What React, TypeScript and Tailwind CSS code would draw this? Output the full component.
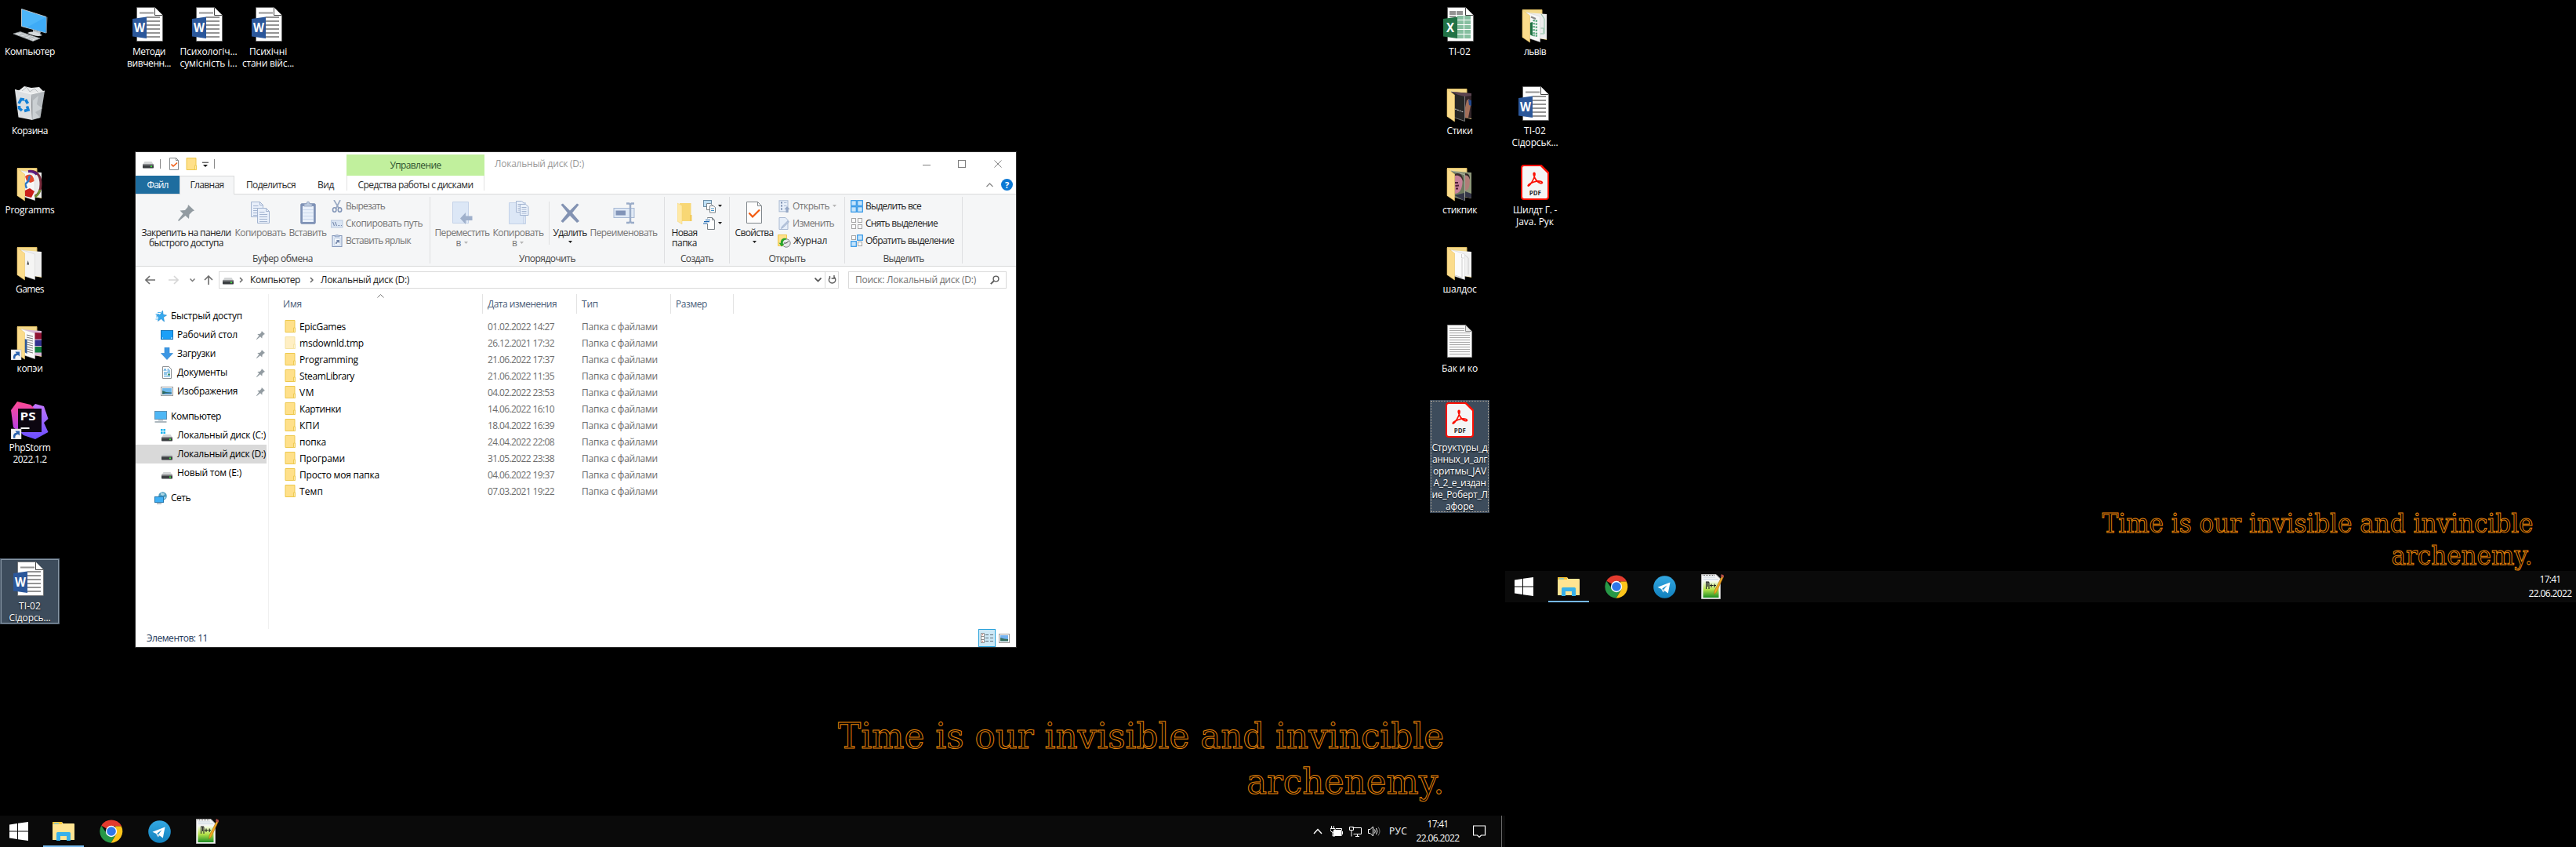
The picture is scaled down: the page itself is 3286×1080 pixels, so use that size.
import React, { useLayoutEffect, useRef } from "react";

/* Text that spreads its letters so that the label is exactly `w` pixels wide. */
function Fit({ w, children, className = "" }: { w: number; children: string; className?: string }) {
  const ref = useRef<HTMLSpanElement>(null);
  useLayoutEffect(() => {
    const el = ref.current;
    if (!el) return;
    el.style.letterSpacing = "0px";
    const natural = el.getBoundingClientRect().width;
    el.style.letterSpacing = `${(w - natural) / children.length}px`;
  }, [w, children]);
  return (
    <span className={`block ${className}`} style={{ width: w }}>
      <span ref={ref} className="inline-block whitespace-pre">
        {children}
      </span>
    </span>
  );
}

/* Outlined slogan line, condensed horizontally to `w` pixels. */
function SloganLine({ w, children }: { w: number; children: string }) {
  const ref = useRef<HTMLSpanElement>(null);
  useLayoutEffect(() => {
    const el = ref.current;
    if (!el) return;
    el.style.transform = "none";
    el.style.transform = `scaleX(${w / el.getBoundingClientRect().width})`;
  }, [w, children]);
  return (
    <span ref={ref} className="block w-max origin-right whitespace-nowrap">
      {children}
    </span>
  );
}

/* ---------- desktop icons (48 × 48) ---------- */

const Box48 = ({ children }: { children: React.ReactNode }) => (
  <svg width="48" height="48" viewBox="0 0 48 48" className="block">
    {children}
  </svg>
);

const OfficeLetter = ({ children, w }: { children: string; w: number }) => (
  <text x="12" y="33.6" textAnchor="middle" fontFamily="Open Sans, sans-serif" fontWeight="700" fontSize="15.5" textLength={w} lengthAdjust="spacingAndGlyphs" fill="#fff">
    {children}
  </text>
);

const WordIcon = () => (
  <Box48>
    <path d="M8.5 2.5H31.5L41.5 12.5V45.5H8.5Z" fill="#fff" stroke="#555" strokeWidth=".6" />
    <path d="M31.5 2.5V12.5H41.5" fill="#fff" stroke="#444" strokeWidth="1" />
    <rect x="12" y="8.5" width="18" height="2" fill="#949494" />
    {[14, 19, 24, 29, 34, 39].map((y) => (
      <rect key={y} x="21" y={y} width="17" height="2" fill="#949494" />
    ))}
    <path d="M3 17L21 14.5V42L3 39.5Z" fill="#2b579a" />
    <OfficeLetter w={14}>W</OfficeLetter>
  </Box48>
);

const ExcelIcon = () => (
  <Box48>
    <path d="M8.5 2.5H31.5L41.5 12.5V45.5H8.5Z" fill="#fff" stroke="#555" strokeWidth=".6" />
    <path d="M31.5 2.5V12.5H41.5" fill="#fff" stroke="#444" strokeWidth="1" />
    {[11, 20].map((x) => (
      <rect key={x} x={x} y="7" width="8" height="5" fill="#949494" />
    ))}
    <rect x="11" y="13" width="8" height="2" fill="#949494" />
    {[13, 19, 25, 31, 37].map((y) => (
      <g key={y} fill="#86bfa0">
        <rect x="21" y={y} width="8" height="5" />
        <rect x="30" y={y} width="8" height="5" />
      </g>
    ))}
    <path d="M3 17L21 14.5V42L3 39.5Z" fill="#217346" />
    <OfficeLetter w={10}>X</OfficeLetter>
  </Box48>
);

const PdfIcon = () => (
  <Box48>
    <path d="M10 2H32L41 11V42Q41 45 38 45H10Q7 45 7 42V5Q7 2 10 2Z" fill="#f5f5f5" stroke="#fb0f02" strokeWidth="2" />
    <path d="M32 2L41 11V13L30 2Z" fill="#fb0f02" />
    <path
      d="M16 26.5C14 28.5 16 29 18.5 25.5C21 22 23.5 17 24 13.5C24.2 10.4 21.5 10.6 22.4 14C23.4 18.5 27 23.6 31 24.6C34.6 25.3 34.2 22.4 30 22C26 21.7 19.5 23.4 16 26.5Z"
      fill="none"
      stroke="#fb0f02"
      strokeWidth="1.7"
    />
    <text x="24.3" y="40.3" textAnchor="middle" fontFamily="Open Sans, sans-serif" fontWeight="700" fontSize="9.5" textLength="15" lengthAdjust="spacingAndGlyphs" fill="#2c2c2c">
      PDF
    </text>
  </Box48>
);

const TextFileIcon = () => (
  <Box48>
    <path d="M8.5 3.5H31.5L39.5 11.5V44.5H8.5Z" fill="#fafafa" stroke="#8f8f8f" />
    {[7, 10, 13, 16, 19, 22, 25, 28, 31, 34, 37, 40].map((y) => (
      <rect key={y} x="11" y={y} width={y < 12 ? 19 : 26} height="1" fill="#a8a8a8" />
    ))}
    <path d="M31.5 3.5V11.5H39.5Z" fill="#e8e8e8" stroke="#8f8f8f" />
  </Box48>
);

const Folder48 = ({ children, shortcut }: { children: React.ReactNode; shortcut?: boolean }) => (
  <Box48>
    <path d="M8 5H33V11H39V44L30 42L18 40L8 41Z" fill="#f3d98b" />
    <path d="M8.5 5.5H33V12" fill="none" stroke="#dcbb62" />
    {children}
    <path d="M8 6L17.5 13V47L8 40.5Z" fill="#fbdc8b" stroke="#e9c468" strokeWidth=".6" />
    {shortcut && <ShortcutArrow />}
  </Box48>
);

const ShortcutArrow = () => (
  <g>
    <rect x="0" y="35" width="13" height="13" fill="#f4f4f4" stroke="#bbb" strokeWidth=".6" />
    <path d="M3 46.5C2.6 42 4 40 7 39.8L5.4 37.6H11V43.4L9 41.8C6.4 42.2 5 43.4 5.4 46.5Z" fill="#2a62ad" />
  </g>
);

const Pages = ({ front = "#f7f7f7", back = "#ececec" }: { front?: string; back?: string }) => (
  <g>
    <path d="M13 9L39 11V43L28 42Z" fill={back} />
    <path d="M13 8.5L30.5 14V46.5L17 42Z" fill={front} stroke="#d0d0d0" strokeWidth=".5" />
  </g>
);

const ProgrammsIcon = () => (
  <Folder48>
    <Pages />
    <path d="M22 9.5C35 8 38 17 38 26S35 39 30.5 41" fill="none" stroke="#7a2b3c" strokeWidth="3" />
    <path d="M22 9.5C28 9 31 11 33 13.5" fill="none" stroke="#5b1a7c" strokeWidth="3" />
    <path d="M37 33C36 37 34 40 30.5 42" fill="none" stroke="#6f8f2f" strokeWidth="3" />
    <path d="M18 16C24 11 29 14 29.5 22L25 24L20 22Z" fill="#e2492c" />
    <path d="M17.5 34L24 31L30 35L26 43L18 41Z" fill="#c9201b" />
    <path d="M24 15L22 22L18 26L20 31" fill="none" stroke="#2d79c7" strokeWidth="2.5" />
  </Folder48>
);
const GamesIcon = () => (
  <Folder48>
    <Pages front="#f5f5f4" back="#eee" />
    <path d="M20.5 27.5L21.7 22L23 27.5Z" fill="#333" />
  </Folder48>
);
const CopyFolderIcon = () => (
  <Folder48 shortcut>
    <Pages front="#fafafa" back="#d8b8d8" />
    <path d="M30.5 13L39 13.5V21.5H30.5Z" fill="#8f1232" />
    <path d="M30.5 22.5H39V30H30.5Z" fill="#32318f" />
    <path d="M30.5 31H39V38.5H30.5Z" fill="#0d7a3a" />
    <path d="M17 21L20.5 22V40L17 38Z" fill="#2b579a" />
    {[16, 19, 22, 25, 28, 31, 34, 37].map((y) => (
      <path key={y} d={`M20 ${y}L28 ${y + 2}`} stroke="#777" strokeWidth="1" />
    ))}
  </Folder48>
);
const LvivIcon = () => (
  <Folder48>
    <Pages />
    <path d="M17.5 22L21 21V39L17.5 37Z" fill="#1d7044" />
    {[19, 23, 27, 31, 35, 38].map((y) => (
      <path key={y} d={`M21.5 ${y}L27.5 ${y + 1}`} stroke="#54a57a" strokeWidth="2.2" strokeDasharray="2.4 .8" />
    ))}
    <path d="M19 14.5L25 17" stroke="#888" strokeWidth="2" />
    <path d="M32 11L36 17V36H31M31.5 29H35V35" fill="none" stroke="#8bbfa3" strokeWidth="1" />
  </Folder48>
);
const StykyIcon = () => (
  <Folder48>
    <Pages front="#262626" back="#33262a" />
    <path d="M13 9L39 11V14L30 15L22 13Z" fill="#5a4350" />
    <path d="M31 29L33 20L36 18L38 26L35 42H31Z" fill="#a3705b" />
    <path d="M35 19L39 20V27L36 26Z" fill="#24498f" />
    <path d="M18 31L29 35" stroke="#b9b9b9" strokeWidth="1.3" strokeDasharray="2 1" />
  </Folder48>
);
const StykpykIcon = () => (
  <Folder48>
    <Pages front="#6e7a60" back="#8d9678" />
    <path d="M17.5 15C23 10 28.5 16 27.5 24C27 32 24 38 17.5 38Z" fill="#c78199" />
    <path d="M18 13C24 10 29 15 28.5 23C26 15 22 14 18 15Z" fill="#3c2c2c" />
    <path d="M31 13C37 13 37 20 36.5 26C36 31 34 34 31 34Z" fill="#b07d78" />
    <path d="M31 12C36 12 37 15 37 20C35 15 34 14.5 31 14.5Z" fill="#2f2525" />
    <path d="M18 24H22M18.5 28L23 27.5M19 31.5H22" stroke="#4d1f35" strokeWidth="1.8" />
    <path d="M17.5 40L30 37V47ZM31 35L39 38V44L31 42Z" fill="#343648" />
  </Folder48>
);
const ShaldosIcon = () => (
  <Folder48>
    <Pages front="#fbfbfb" back="#f1f1f1" />
    <path d="M26.5 14V19H29M30.5 15L35 19V40M27 20V44L18 41" fill="none" stroke="#c9c9c9" strokeWidth=".9" />
  </Folder48>
);

const ComputerIcon = () => (
  <Box48>
    <path d="M13.5 4.5L45 14.5V35L13.5 26.5Z" fill="#4db6fa" stroke="#b9c4cb" />
    <path d="M45 14.5V35L20 28Z" fill="#38a7f5" opacity=".7" />
    <path d="M46 15L45 35" stroke="#6c7780" />
    <path d="M28 31L38 33.5L37 37L28 35Z" fill="#b9c0c4" />
    <path d="M21 35Q29 31 40 38Q33 41 21 35Z" fill="#d8dcde" />
    <path d="M3 36L12 33.5L37 42L28 45.5Z" fill="#e4e7e9" stroke="#8c9397" strokeWidth=".7" />
    <path d="M8 35L32 43.6M6 36.6L28 44M10 34L34 42.8M9 38.5L18 35.5M15 40.5L24 37.8M21 42.5L30 40" stroke="#9aa1a5" strokeWidth=".6" />
  </Box48>
);

const BinIcon = () => (
  <Box48>
    <path d="M8 9L17 2L26 4L36 3L41 8L28 14Z" fill="#e9ebec" />
    <path d="M14 8L20 3L24 9L30 5L35 10" fill="none" stroke="#b9bdc0" />
    <path d="M5 6.5L26 12L27 45L9.5 41.5Z" fill="#dcdfe2" />
    <path d="M43 8L26 12L27 45L37.5 42Z" fill="#b3b8bc" />
    <path d="M28 20L35 14L33 25L40 30L31 35L37 42L28 44Z" fill="#cbd0d3" />
    <path d="M5 6.5L26 12L43 8" fill="none" stroke="#f5f6f6" strokeWidth="1.2" />
    <path d="M10 24L13 18.5L17 19M18.5 19L21.5 24M20.5 27.5L22 32L17 33.5M14 33L10.5 30V27" fill="none" stroke="#1380d6" strokeWidth="3.6" />
  </Box48>
);

const PhpStormIcon = () => (
  <Box48>
    <defs>
      <linearGradient id="ps-a" x1="0" y1="0" x2="0" y2="1">
        <stop offset="0" stopColor="#ff4a93" />
        <stop offset="1" stopColor="#b43fea" />
      </linearGradient>
      <linearGradient id="ps-b" x1="0" y1="0" x2="0" y2="1">
        <stop offset="0" stopColor="#c478ff" />
        <stop offset="1" stopColor="#6a4dff" />
      </linearGradient>
    </defs>
    <path d="M26 8L31 3L42 6L47.5 22L42 27L47.5 39L31 48L16 43L9 36L24 10Z" fill="url(#ps-b)" />
    <path d="M0 11L8 0L25 4L30 9L10 38L3 33Z" fill="url(#ps-a)" />
    <rect x="9" y="9" width="30" height="30" fill="#0c0610" />
    <text x="11.5" y="23.5" fontFamily="Open Sans, sans-serif" fontWeight="700" fontSize="15" textLength="20" lengthAdjust="spacingAndGlyphs" fill="#fff">
      PS
    </text>
    <rect x="12.5" y="33" width="11" height="2" fill="#fff" />
    <ShortcutArrow />
  </Box48>
);

type DesktopItem = {
  x: number;
  y: number;
  icon: React.ReactNode;
  lines: [string, number][];
  selected?: boolean;
  dotted?: boolean;
};

const desktopItems: DesktopItem[] = [
  { x: 0, y: 5, icon: <ComputerIcon />, lines: [["Компьютер", 64]] },
  { x: 0, y: 106, icon: <BinIcon />, lines: [["Корзина", 46]] },
  { x: 0, y: 207, icon: <ProgrammsIcon />, lines: [["Programms", 63]] },
  { x: 0, y: 308, icon: <GamesIcon />, lines: [["Games", 36]] },
  { x: 0, y: 409, icon: <CopyFolderIcon />, lines: [["копэи", 33]] },
  { x: 0, y: 510, icon: <PhpStormIcon />, lines: [["PhpStorm", 53], ["2022.1.2", 43]] },
  { x: 0, y: 712, icon: <WordIcon />, lines: [["ТІ-02", 28], ["Сідорсь...", 53]], selected: true },
  { x: 152, y: 5, icon: <WordIcon />, lines: [["Методи", 42], ["вивченн...", 56]] },
  { x: 228, y: 5, icon: <WordIcon />, lines: [["Психологіч...", 73], ["сумісність і...", 73]] },
  { x: 304, y: 5, icon: <WordIcon />, lines: [["Психічні", 48], ["стани війс...", 66]] },
  { x: 1824, y: 5, icon: <ExcelIcon />, lines: [["ТІ-02", 28]] },
  { x: 1824, y: 106, icon: <StykyIcon />, lines: [["Стики", 33]] },
  { x: 1824, y: 207, icon: <StykpykIcon />, lines: [["стикпик", 44]] },
  { x: 1824, y: 308, icon: <ShaldosIcon />, lines: [["шалдос", 43]] },
  { x: 1824, y: 409, icon: <TextFileIcon />, lines: [["Бак и ко", 46]] },
  {
    x: 1824,
    y: 510,
    icon: <PdfIcon />,
    lines: [["Структуры_д", 71], ["анных_и_алг", 70], ["оритмы_JAV", 68], ["А_2_е_издан", 67], ["ие_Роберт_Л", 71], ["афоре", 36]],
    selected: true,
    dotted: true,
  },
  { x: 1920, y: 5, icon: <LvivIcon />, lines: [["львів", 28]] },
  { x: 1920, y: 106, icon: <WordIcon />, lines: [["ТІ-02", 28], ["Сідорськ...", 59]] },
  { x: 1920, y: 207, icon: <PdfIcon />, lines: [["Шилдт Г. -", 56], ["Java. Рук", 48]] },
];

function DesktopIcon({ item }: { item: DesktopItem }) {
  const frame = item.selected
    ? item.dotted
      ? "bg-[#3d4c5c] outline-1 -outline-offset-2 outline-dotted outline-[#b3aa9c]"
      : "bg-[#3d4c5c] border border-[#526171] outline-1 -outline-offset-2 outline-[#8796a5]"
    : "";
  return (
    <div className={`absolute w-[76px] ${frame}`} style={{ left: item.x, top: item.y }}>
      <div className={`flex flex-col items-center pb-px ${item.selected && !item.dotted ? "-m-px pb-0.5" : ""}`}>
        <div className="mt-0.5 h-[51px]">{item.icon}</div>
        {item.lines.map(([t, w], i) => (
          <Fit key={i} w={w} className="h-[15px] leading-[15px] text-white [text-shadow:0_1px_2px_#000]">
            {t}
          </Fit>
        ))}
      </div>
    </div>
  );
}

/* ---------- small icons ---------- */

const S = ({ w = 16, h = 16, children, className = "" }: { w?: number; h?: number; children: React.ReactNode; className?: string }) => (
  <svg width={w} height={h} viewBox={`0 0 ${w} ${h}`} className={`block shrink-0 ${className}`}>
    {children}
  </svg>
);

const DriveIcon = ({ win = false }: { win?: boolean }) => (
  <S>
    <path d="M3.5 7H12.5L15 11H1Z" fill="#d3d5d6" />
    <rect x="1" y="10.5" width="14" height="5" rx=".8" fill="#3c3f42" />
    <rect x="1" y="10.5" width="14" height="1.2" fill="#8b8e90" />
    <rect x="11" y="12.5" width="2" height="1.6" fill="#3cf03c" />
    {win && <path d="M0 0H2.6V2.6H0ZM3.4 0H6V2.6H3.4ZM0 3.4H2.6V6H0ZM3.4 3.4H6V6H3.4Z" fill="#1cb4ef" />}
  </S>
);
const FolderSmall = ({ faded = false }: { faded?: boolean }) => (
  <S className={faded ? "opacity-50" : ""}>
    <path d="M2 .5H14V15.5H2Z" fill="#ffe08a" stroke="#edc84c" />
    <path d="M12.5 15.5V10H14.5V15.5Z" fill="#ffe9a8" stroke="#edc84c" strokeWidth=".9" />
  </S>
);
const CheckDoc = ({ big = false }: { big?: boolean }) =>
  big ? (
    <S w={22} h={30}>
      <path d="M1.5 1.5H15.5L20.5 6.5V28.5H1.5Z" fill="#fdfdfd" stroke="#7f868b" />
      <path d="M15.5 1.5V6.5H20.5" fill="none" stroke="#7f868b" />
      <path d="M4.5 15.5L9 20.5L18 11.5" fill="none" stroke="#f2590d" strokeWidth="2.2" />
    </S>
  ) : (
    <S>
      <path d="M2.5 .5H10.5L13.5 3.5V15.5H2.5Z" fill="#fdfdfd" stroke="#85898c" />
      <path d="M10.5 .5V3.5H13.5" fill="none" stroke="#85898c" />
      <path d="M4.5 8.5L7 11L12 6.5" fill="none" stroke="#f2590d" strokeWidth="1.6" />
    </S>
  );
const Pin = ({ big = false }: { big?: boolean }) => (
  <svg width={big ? 21 : 11} height={big ? 21 : 11} viewBox="0 0 21 21" className="block shrink-0">
    <path d="M13 0L21 7.5L18.5 8.5L14.5 12.5L14 18L9.5 14L1 21L0 20L6.5 11.5L2.5 7.5L9 7L12.5 3Z" fill="#929ba1" />
  </svg>
);
const Down = ({ className = "text-black" }: { className?: string }) => (
  <S w={7} h={4} className={className}>
    <path d="M1 0H6L3.5 3Z" fill="currentColor" />
  </S>
);
const Chevron = () => (
  <S w={5} h={8}>
    <path d="M1 1L4 4L1 7" fill="none" stroke="#666" strokeWidth="1.5" />
  </S>
);

const CopyBig = () => (
  <S w={25} h={30}>
    {[[0.5, 1.5], [8.5, 9.5]].map(([x, y]) => (
      <g key={x} transform={`translate(${x} ${y})`}>
        <path d="M0 0H11L15 4V19H0Z" fill="#e8effa" stroke="#a3b4d0" />
        <path d="M11 0V4H15M2.5 5H9M2.5 8H12.5M2.5 11H12.5M2.5 14H12.5M2.5 17H12.5" fill="none" stroke="#a3b4d0" />
      </g>
    ))}
  </S>
);
const PasteBig = () => (
  <S w={20} h={30}>
    <rect x=".8" y="3.8" width="18.4" height="25.4" rx="1" fill="#8194b8" stroke="#7a8db1" />
    <rect x="3" y="7" width="14" height="20" fill="#eaf1fb" />
    <path d="M3.5 11.5H16.5M3.5 15.5H16.5M3.5 19.5H16.5M3.5 23.5H16.5" stroke="#c9d7ec" />
    <path d="M5 7V4H8Q8 1 10 1T12 4H15V7Z" fill="#bccbe0" stroke="#8fa0bd" strokeWidth=".8" />
  </S>
);
const MoveTo = () => (
  <S w={27} h={30}>
    <path d="M1.5 1.5H21.5V28.5H1.5Z" fill="#dce7f6" stroke="#c4d2e8" />
    <path d="M19 20H21.5V28.5H19Z" fill="#e8eff9" stroke="#c4d2e8" />
    <path d="M11 22.5L18 15V19.5H26.5V25H18V30Z" fill="#9fb0cb" />
  </S>
);
const CopyTo = () => (
  <S w={27} h={30}>
    <path d="M1.5 2.5H22.5V29.5H1.5Z" fill="#dce7f6" stroke="#c4d2e8" />
    <path d="M19.5 20H22V29H19.5Z" fill="#e8eff9" stroke="#c4d2e8" />
    {[[10.5, 0.5], [15.5, 4.5]].map(([x, y]) => (
      <g key={x} transform={`translate(${x} ${y})`}>
        <path d="M0 0H7L10.5 3V14H0Z" fill="#eaf1fb" stroke="#a3b4d0" />
        <path d="M2 4H8M2 6.5H8M2 9H8M2 11.5H8" stroke="#a3b4d0" />
      </g>
    ))}
  </S>
);
const DeleteX = () => (
  <S w={26} h={30}>
    <path d="M1.5 5L4 3.5L13 12.5L22 3.5L24.5 5L16 15.5L25 26L22 28L13 19L4 28L1.5 26L10 15.5Z" fill="#8393b3" />
  </S>
);
const RenameBig = () => (
  <S w={28} h={30}>
    <rect x="1" y="9.5" width="26" height="12" fill="#dfe9f6" stroke="#a7b8d3" />
    <rect x="3.5" y="12.5" width="12.5" height="6" fill="#8194b8" />
    <path d="M17 3.5H20.5L22 5L23.5 3.5H27M22 4.5V27M17 28H20.5L22 26.5L23.5 28H27" fill="none" stroke="#9aacc8" strokeWidth="2.4" />
  </S>
);
const NewFolderBig = () => (
  <S w={19} h={30}>
    <path d="M3 3H17.5V26H5Z" fill="#f8d775" />
    <path d="M0 3L6 6V30L0 26Z" fill="#ffe9a6" stroke="#f1d06e" strokeWidth=".5" />
    <path d="M16 18H18.5V26H16Z" fill="#f2cb5c" />
  </S>
);
const ScissorsIcon = () => (
  <S>
    <path d="M4 0L10.5 11M12 0L6.5 11" stroke="#9aaac4" strokeWidth="1.7" />
    <ellipse cx="4.7" cy="12.5" rx="2.2" ry="2.7" fill="none" stroke="#8396b8" strokeWidth="1.6" />
    <ellipse cx="11.5" cy="12.5" rx="2.2" ry="2.7" fill="none" stroke="#8396b8" strokeWidth="1.6" />
  </S>
);
const PathIcon = () => (
  <S>
    <rect x=".5" y="4" width="14.5" height="9" fill="#dbe6f4" stroke="#b9c8de" />
    <path d="M2.5 6L4.5 11M5.5 6L7.5 11" stroke="#7588ab" strokeWidth="1.1" />
    <path d="M9 10.5H10M11 10.5H12M13 10.5H14" stroke="#7588ab" />
  </S>
);
const PasteShortcut = () => (
  <S>
    <rect x="2" y="1.5" width="12" height="14" fill="#e3ecf8" stroke="#8194b8" />
    <path d="M5 3V1H6.5L8 0L9.5 1H11V3Z" fill="#b6c5dc" stroke="#8194b8" strokeWidth=".6" />
    <rect x="4.5" y="5" width="7.5" height="8.5" fill="#f3f7fc" stroke="#b7c5da" strokeWidth=".6" />
    <path d="M6 12C6 9.5 6.5 9 8 8.8L7 7H11V11L9.5 10C8 10.2 7.5 10.8 7.7 12Z" fill="#7588ab" />
  </S>
);
const NewItem = () => (
  <S w={17} h={17}>
    <rect x=".5" y=".5" width="10" height="8" fill="#bfe0f5" stroke="#6d8fa8" />
    <path d="M4.5 4.5H9.5L11.5 6.5V12.5H4.5Z" fill="#fff" stroke="#7b8287" />
    <path d="M8.5 7.5H13L15.5 9.5V16H8.5Z" fill="#fff" stroke="#7b8287" />
    <path d="M10 11H14M10 13.5H14" stroke="#3c8fc9" />
  </S>
);
const EasyAccess = () => (
  <S w={17} h={16}>
    <path d="M5.5 1.5V.5H11.5L14.5 3.5V15.5H5.5V8" fill="#fff" stroke="#7b8287" />
    <path d="M11.5 .5V3.5H14.5" fill="none" stroke="#7b8287" />
    <path d="M3 3.5H9M1 5.7H8M0 8H5" stroke="#1b66b0" strokeWidth="1.2" />
  </S>
);
const OpenIcon = () => (
  <S>
    <rect x="2" y=".8" width="11" height="14" fill="#e6eef9" stroke="#a9b9d2" />
    <path d="M4 3.5H6M4 7.5H6M4 11.5H6" stroke="#7588ab" strokeWidth="2" />
    <path d="M8 3.5H11.5M8 7.5H11.5" stroke="#a9b9d2" />
    <path d="M12 8L15.5 12H13.5V16H10.5V12H8.5Z" fill="#94a6c5" />
  </S>
);
const EditIcon = () => (
  <S>
    <path d="M2 .5H10L13 3.5V15.5H2Z" fill="#e6eef9" stroke="#a9b9d2" />
    <path d="M14.5 6L7 13L4.5 14.5L5.5 12L13 4.5Z" fill="#b9c8de" stroke="#94a6c5" strokeWidth=".7" />
  </S>
);
const HistoryIcon = () => (
  <S w={17} h={17}>
    <path d="M.5 .5H11.5V14.5H.5Z" fill="#ffe08a" stroke="#edc84c" />
    <circle cx="11" cy="11" r="5.2" fill="#e6e7e8" stroke="#808488" />
    <path d="M11 11L14 8.5M11 11H8" stroke="#444" />
    <path d="M11 5C6 4 3.5 7 3.8 11L1.5 10.5L5 15.5L8.5 12L6.5 11.5C6.5 8.5 8 6.5 11 6.5Z" fill="#28a52c" />
  </S>
);
const SelectIcon = ({ on }: { on: boolean[] }) => (
  <S>
    {[0, 1, 2, 3].map((i) => {
      const x = i % 2 ? 9 : 1;
      const y = i > 1 ? 9 : 1;
      return on[i] ? (
        <rect key={i} x={x - 0.3} y={y - 0.3} width="6.6" height="6.6" fill="#c5e4fb" stroke="#2f95e6" strokeWidth="1.2" />
      ) : (
        <rect key={i} x={x + 0.5} y={y + 0.5} width="5" height="5" fill="#fafafa" stroke="#a5a5a5" />
      );
    })}
  </S>
);

/* ---------- ribbon pieces ---------- */

const dim = "text-[#757575]";

function BigButton({ icon, lines, arrow, width, disabled, className = "" }: { icon: React.ReactNode; lines: [string, number][]; arrow?: boolean; width: string; disabled?: boolean; className?: string }) {
  return (
    <div className={`flex shrink-0 flex-col items-center pt-[7px] ${width} ${disabled ? dim : "text-[#1f1f1f]"} ${className}`}>
      <div className="flex h-8 items-center">{icon}</div>
      <div className="mt-[3px] flex flex-col items-center leading-[13px]">
        {lines.map(([t, w], i) => (
          <div key={i} className="flex h-[13px] items-center gap-0.5">
            <Fit w={w}>{t}</Fit>
            {t === "в" && <Down className="mt-px text-[#b5b5b5]" />}
          </div>
        ))}
        {arrow && <Down className="mt-1" />}
      </div>
    </div>
  );
}

function SmallButton({ icon, text, w, disabled, arrow }: { icon: React.ReactNode; text?: string; w?: number; disabled?: boolean; arrow?: boolean }) {
  return (
    <div className={`flex h-[22px] items-center gap-[3px] ${disabled ? dim : "text-[#1f1f1f]"}`}>
      {icon}
      {text && w && <Fit w={w} className="leading-[22px]">{text}</Fit>}
      {arrow && <Down className={disabled ? "text-[#b5b5b5]" : "-ml-0.5"} />}
    </div>
  );
}

function Group({ width, label, lw, children }: { width: string; label: string; lw: number; children: React.ReactNode }) {
  return (
    <div className={`flex shrink-0 ${width}`}>
      <div className="flex flex-1 flex-col">
        <div className="flex h-[74px] items-start">{children}</div>
        <div className="flex h-4 items-center justify-center text-[#444]">
          <Fit w={lw}>{label}</Fit>
        </div>
      </div>
      <div className="my-[3px] w-px bg-[#dedfe1]" />
    </div>
  );
}

/* ---------- explorer data ---------- */

const rows: [string, number, string][] = [
  ["EpicGames", 59, "01.02.2022 14:27"],
  ["msdownld.tmp", 82, "26.12.2021 17:32"],
  ["Programming", 75, "21.06.2022 17:37"],
  ["SteamLibrary", 70, "21.06.2022 11:35"],
  ["VM", 19, "04.02.2022 23:53"],
  ["Картинки", 53, "14.06.2022 16:10"],
  ["КПИ", 26, "18.04.2022 16:39"],
  ["попка", 34, "24.04.2022 22:08"],
  ["Програми", 58, "31.05.2022 23:38"],
  ["Просто моя папка", 102, "04.06.2022 19:37"],
  ["Темп", 30, "07.03.2021 19:22"],
];

const NavRow = ({ icon, text, w, root, pinned, active }: { icon: React.ReactNode; text: string; w: number; root?: boolean; pinned?: boolean; active?: boolean }) => (
  <div className={`flex h-6 w-[167px] items-center ${root ? "pl-6" : "pl-8"} ${active ? "bg-[#d9d9d9]" : ""}`}>
    {icon}
    <Fit w={w} className="ml-[5px] leading-6">{text}</Fit>
    {pinned && (
      <div className="mr-[2px] ml-auto">
        <Pin />
      </div>
    )}
  </div>
);

const StarIcon = () => (
  <S>
    <path d="M10.5 1L11 6L15.5 7L11.5 9.5L12.5 15L8.5 11.5L4.5 14.5L5.5 9.5L2.5 7L7.5 6Z" fill="#36a9ee" stroke="#1b84cc" strokeWidth=".6" />
    <path d="M4 3.5H8M1.5 5.5H6M2 9H5M1.5 12H5" stroke="#4fb4f0" />
  </S>
);
const DeskIcon = () => (
  <S>
    <rect x=".5" y="2.5" width="15" height="11" fill="#1ba0f8" stroke="#1273b8" />
    <path d="M2 12H3M13 12H15" stroke="#fff" />
  </S>
);
const DownloadIcon = () => (
  <S>
    <path d="M5 0H11V7.5H15.5L8 15.5L.5 7.5H5Z" fill="#3c97e4" stroke="#2a7fc9" strokeWidth=".6" />
  </S>
);
const DocIcon = () => (
  <S>
    <path d="M2.5 .5H10.5L13.5 3.5V15.5H2.5Z" fill="#fdfdfd" stroke="#8a8e91" />
    <path d="M4 6L5.5 3L7 6M8.5 4H11M8.5 6H12M4 8H12M4 10H8" fill="none" stroke="#2d93d6" />
    <rect x="9" y="9.5" width="3" height="2" fill="#3f8f6a" />
    <path d="M4 12.5H12" stroke="#2d93d6" />
  </S>
);
const PictureIcon = () => (
  <S>
    <rect x=".5" y="2.5" width="15" height="11" fill="#fff" stroke="#94989b" />
    <rect x="2" y="4" width="12" height="8" fill="#6bb6ea" />
    <path d="M2 7L7 9L14 9.5V12H2Z" fill="#2d6a62" />
    <path d="M6 10H14V12H2Z" fill="#4586b5" />
  </S>
);
const PcIcon = () => (
  <S>
    <rect x=".5" y="1.5" width="15" height="10" fill="#4fb7f5" stroke="#5d91b5" />
    <path d="M5 13H11" stroke="#97a7b1" />
    <path d="M.5 15H15.5" stroke="#8c9aa4" strokeWidth="1.4" />
  </S>
);
const NetIcon = () => (
  <S>
    <circle cx="10.5" cy="5.5" r="5.3" fill="#4c9cc0" />
    <path d="M8 1.5Q12 1 13.5 3L11 5L8 4ZM11 7L15 6.5L13 9.5Z" fill="#a9d4e4" />
    <rect x=".5" y="6.5" width="11" height="7" fill="#3fb0f5" stroke="#2376ad" />
    <path d="M3 15.3H9" stroke="#8c9aa4" strokeWidth="1.2" />
  </S>
);

function Explorer() {
  return (
    <div className="absolute top-[193px] left-[172px] flex h-[633px] w-[1125px] flex-col border border-[#2d2d2d] bg-white">
      {/* title bar */}
      <div className="flex h-[30px] shrink-0 items-start">
        <div className="flex w-[269px] items-center pt-[7px] pl-2">
          <div className="-mt-1"><DriveIcon /></div>
          <div className="mr-[9px] ml-[7px] h-3 w-px bg-[#8a8a8a]" />
          <CheckDoc />
          <div className="ml-[6px]"><FolderSmall /></div>
          <S w={8} h={8} className="mt-0.5 ml-[6px]">
            <path d="M0 1.2H8" stroke="#222" />
            <path d="M1 4H7L4 7Z" fill="#111" />
          </S>
          <div className="ml-[7px] h-3 w-px bg-[#8a8a8a]" />
        </div>
        <div className="mt-[3px] flex h-[27px] w-44 items-center justify-center bg-[#c1f09d] text-[#2f5230]">
          <Fit w={65}>Управление</Fit>
        </div>
        <Fit w={114} className="ml-[13px] leading-[30px] text-[#999]">Локальный диск (D:)</Fit>
        <div className="ml-auto flex h-[30px] items-center pr-[17px] text-[#808080]">
          <S w={11} h={11}><path d="M0 6.5H10" stroke="currentColor" /></S>
          <S w={11} h={11} className="ml-[34px]"><rect x=".5" y=".5" width="9" height="9" fill="none" stroke="currentColor" /></S>
          <S w={11} h={11} className="ml-[35px]"><path d="M.5 .5L9.5 9.5M9.5 .5L.5 9.5" stroke="currentColor" /></S>
        </div>
      </div>

      {/* tabs */}
      <div className="flex h-6 shrink-0 leading-[23px] text-[#2b2b2b]">
        <div className="flex w-14 justify-center border-b border-[#dadbdc] bg-[#1e6d9f] text-white"><Fit w={27}>Файл</Fit></div>
        <div className="flex w-[70px] justify-center border-x border-t border-[#dadbdc] bg-[#f5f6f7] leading-[22px]"><Fit w={43}>Главная</Fit></div>
        <div className="flex w-[143px] border-b border-[#dadbdc] pl-[15px]">
          <Fit w={63}>Поделиться</Fit>
          <Fit w={21} className="ml-[28px]">Вид</Fit>
        </div>
        <div className="flex w-44 justify-center border-b border-[#dadbdc]">
          <div className="mb-1 w-px bg-[#e2e2e2]" />
          <div className="flex flex-1 justify-center"><Fit w={147}>Средства работы с дисками</Fit></div>
          <div className="mb-1 w-px bg-[#e2e2e2]" />
        </div>
        <div className="flex flex-1 items-center justify-end border-b border-[#dadbdc] pr-1">
          <S w={9} h={6}><path d="M.5 5L4.5 1L8.5 5" fill="none" stroke="#8b8b8b" strokeWidth="1.3" /></S>
          <div className="ml-[10px] flex size-[15px] items-center justify-center rounded-full bg-[#0a78d4] text-[11px] leading-none font-bold text-white">?</div>
        </div>
      </div>

      {/* ribbon */}
      <div className="flex h-[92px] shrink-0 border-b border-[#dadbdc] bg-[#f5f6f7]">
        <Group width="w-[376px]" label="Буфер обмена" lw={77}>
          <BigButton className="ml-[7px]" width="w-[115px]" icon={<Pin big />} lines={[["Закрепить на панели", 114], ["быстрого доступа", 95]]} />
          <BigButton className="ml-1" width="w-[66px]" disabled icon={<CopyBig />} lines={[["Копировать", 65]]} />
          <BigButton className="ml-[3px]" width="w-[49px]" disabled icon={<PasteBig />} lines={[["Вставить", 48]]} />
          <div className="mt-1 ml-[5px]">
            <SmallButton disabled icon={<ScissorsIcon />} text="Вырезать" w={50} />
            <SmallButton disabled icon={<PathIcon />} text="Скопировать путь" w={98} />
            <SmallButton disabled icon={<PasteShortcut />} text="Вставить ярлык" w={83} />
          </div>
        </Group>
        <Group width="w-[299px]" label="Упорядочить" lw={72}>
          <BigButton className="ml-[5px]" width="w-[71px]" disabled icon={<MoveTo />} lines={[["Переместить", 70], ["в", 7]]} />
          <BigButton className="ml-[3px]" width="w-[66px]" disabled icon={<CopyTo />} lines={[["Копировать", 65], ["в", 7]]} />
          <div className="mt-[9px] ml-[6px] h-[55px] w-px bg-[#dedfe1]" />
          <BigButton className="ml-1" width="w-11" arrow icon={<DeleteX />} lines={[["Удалить", 43]]} />
          <BigButton className="ml-[3px]" width="w-[87px]" disabled icon={<RenameBig />} lines={[["Переименовать", 86]]} />
        </Group>
        <Group width="w-[83px]" label="Создать" lw={42}>
          <BigButton className="ml-2" width="w-[34px]" icon={<NewFolderBig />} lines={[["Новая", 33], ["папка", 32]]} />
          <div className="mt-1 ml-[7px]">
            <SmallButton icon={<NewItem />} arrow />
            <SmallButton icon={<EasyAccess />} arrow />
          </div>
        </Group>
        <Group width="w-[147px]" label="Открыть" lw={47}>
          <BigButton className="ml-[6px]" width="w-[50px]" arrow icon={<CheckDoc big />} lines={[["Свойства", 49]]} />
          <div className="mt-1 ml-[5px]">
            <SmallButton disabled icon={<OpenIcon />} text="Открыть" w={47} arrow />
            <SmallButton disabled icon={<EditIcon />} text="Изменить" w={53} />
            <SmallButton icon={<HistoryIcon />} text="Журнал" w={43} />
          </div>
        </Group>
        <Group width="w-[150px]" label="Выделить" lw={52}>
          <div className="mt-1 ml-[7px]">
            <SmallButton icon={<SelectIcon on={[true, true, true, true]} />} text="Выделить все" w={71} />
            <SmallButton icon={<SelectIcon on={[false, false, false, false]} />} text="Снять выделение" w={92} />
            <SmallButton icon={<SelectIcon on={[false, true, true, false]} />} text="Обратить выделение" w={113} />
          </div>
        </Group>
      </div>

      {/* address row */}
      <div className="flex h-[34px] shrink-0 items-center pr-3 pl-[12px] text-[#1a1a1a]">
        <S w={13} h={12}><path d="M6 1L1 6L6 11M1 6H13" fill="none" stroke="#6d6d6d" strokeWidth="1.6" /></S>
        <S w={13} h={12} className="ml-[17px]"><path d="M7 1L12 6L7 11M12 6H0" fill="none" stroke="#d6d6d6" strokeWidth="1.6" /></S>
        <S w={7} h={5} className="ml-[14px]"><path d="M.5 .5L3.5 3.5L6.5 .5" fill="none" stroke="#7a7a7a" strokeWidth="1.5" /></S>
        <S w={12} h={12} className="ml-[11px]"><path d="M1 6L6 1L11 6M6 1V12" fill="none" stroke="#6d6d6d" strokeWidth="1.6" /></S>
        <div className="ml-[7px] flex h-[22px] w-[791px] items-center border border-[#d9d9d9]">
          <div className="-mt-1 ml-[3px]"><DriveIcon /></div>
          <div className="ml-[6px]"><Chevron /></div>
          <Fit w={64} className="ml-[9px] leading-5">Компьютер</Fit>
          <div className="ml-[12px]"><Chevron /></div>
          <Fit w={113} className="ml-[9px] leading-5">Локальный диск (D:)</Fit>
          <S w={9} h={6} className="mr-1 ml-auto"><path d="M.5 .5L4.5 4.5L8.5 .5" fill="none" stroke="#555" strokeWidth="1.7" /></S>
          <div className="flex h-full w-[17px] items-center justify-center border-l border-[#d9d9d9]">
            <S w={11} h={12}><path d="M3 2.5A4.2 4.2 0 1 0 8.3 2.6M2.5 1V4.5M8 0V4H4.6" fill="none" stroke="#5c5c5c" strokeWidth="1.4" /></S>
          </div>
        </div>
        <div className="ml-3 flex h-[22px] flex-1 items-center border border-[#d9d9d9] pr-2 pl-2 text-[#727272]">
          <Fit w={154} className="leading-5">Поиск: Локальный диск (D:)</Fit>
          <S w={12} h={12} className="ml-auto"><circle cx="7.5" cy="4.5" r="3.4" fill="none" stroke="#5c5c5c" strokeWidth="1.4" /><path d="M5 7L.8 11.2" stroke="#5c5c5c" strokeWidth="1.9" /></S>
        </div>
      </div>

      {/* body */}
      <div className="mt-px flex h-[427px] shrink-0 text-black">
        <div className="w-[170px] shrink-0 border-r border-[#f0f0f0] pt-4">
          <NavRow root icon={<StarIcon />} text="Быстрый доступ" w={91} />
          <NavRow icon={<DeskIcon />} text="Рабочий стол" w={77} pinned />
          <NavRow icon={<DownloadIcon />} text="Загрузки" w={49} pinned />
          <NavRow icon={<DocIcon />} text="Документы" w={64} pinned />
          <NavRow icon={<PictureIcon />} text="Изображения" w={77} pinned />
          <div className="h-2" />
          <NavRow root icon={<PcIcon />} text="Компьютер" w={64} />
          <NavRow icon={<DriveIcon win />} text="Локальный диск (C:)" w={113} />
          <NavRow icon={<DriveIcon />} text="Локальный диск (D:)" w={113} active />
          <NavRow icon={<DriveIcon />} text="Новый том (E:)" w={82} />
          <div className="h-2" />
          <NavRow root icon={<NetIcon />} text="Сеть" w={25} />
        </div>
        <div className="flex-1">
          <div className="flex h-[25px] leading-[26px] text-[#4c607a]">
            <div className="relative w-[273px] border-r border-[#e3e3e3] pl-[18px]">
              <Fit w={24}>Имя</Fit>
              <S w={9} h={5} className="absolute top-0 left-[138px]"><path d="M.5 4.5L4.5 .5L8.5 4.5" fill="none" stroke="#777" /></S>
            </div>
            <div className="w-[120px] border-r border-[#e3e3e3] pl-[6px]"><Fit w={88}>Дата изменения</Fit></div>
            <div className="w-[120px] border-r border-[#e3e3e3] pl-[6px]"><Fit w={21}>Тип</Fit></div>
            <div className="w-20 border-r border-[#e3e3e3] pl-[6px]"><Fit w={40}>Размер</Fit></div>
          </div>
          <div className="pt-[6px]">
            {rows.map(([name, w, date], i) => (
              <div key={name} className="flex h-[21px] items-center leading-[21px]">
                <div className="-mt-px ml-[19px]"><FolderSmall faded={i === 1} /></div>
                <div className="ml-1 w-[240px]"><Fit w={w}>{name}</Fit></div>
                <div className="w-[120px] text-[#6d6d6d]"><Fit w={85}>{date}</Fit></div>
                <div className="text-[#6d6d6d]"><Fit w={97}>Папка с файлами</Fit></div>
              </div>
            ))}
          </div>
        </div>
      </div>

      {/* status bar */}
      <div className="flex flex-1 items-center pr-2 pl-[14px] text-[#1e395b]">
        <Fit w={78} className="leading-[22px]">Элементов: 11</Fit>
        <div className="ml-auto flex h-[23px] w-[22px] items-center justify-center border border-[#26a0da] bg-[#cce8f6]">
          <S w={16} h={13}>
            <path d="M.5 .5H4.5V12.5H.5ZM.5 4.5H4.5M.5 8.5H4.5" fill="#fff" stroke="#8c8c8c" />
            <path d="M2 2.5H3M2 10.5H3" stroke="#c0392b" />
            <path d="M6 2.5H10M12 2.5H16M6 6.5H10M12 6.5H16M6 10.5H10M12 10.5H16" stroke="#5d6b75" />
          </S>
        </div>
        <S w={14} h={12} className="ml-1">
          <rect x=".5" y=".5" width="13" height="11" fill="#fff" stroke="#9a9a9a" />
          <rect x="2" y="2" width="10" height="7.5" fill="#74b2f0" />
          <path d="M2 5L7 6.5L12 7V9.5H2Z" fill="#38705f" />
        </S>
      </div>
    </div>
  );
}

/* ---------- taskbar ---------- */

const WindowsLogo = () => (
  <S w={24} h={24}>
    <path d="M0 3.4L10 2V11.5H0ZM11 1.8L24 0V11.5H11ZM0 12.5H10V22L0 20.6ZM11 12.5H24V24L11 22.2Z" fill="#fff" />
  </S>
);
const ExplorerLogo = () => (
  <S w={28} h={24}>
    <path d="M0 1Q0 0 1 0H12L13.5 2H27Q28 2 28 3V23H0Z" fill="#ffe492" />
    <path d="M0 3V1Q0 0 1 0H12V3Z" fill="#fcc635" />
    <rect x="2" y="1.2" width="6" height="1.5" fill="#7bc8d8" />
    <path d="M5 24V14.5Q5 13 6.5 13H21.5Q23 13 23 14.5V24H18V18H10V24Z" fill="#38b1ea" />
  </S>
);
const ChromeLogo = () => (
  <S w={30} h={30}>
    <path d="M15 15L2.3 7.7A14.7 14.7 0 0 1 27.7 7.7L28.3 8.5H15Z" fill="#e33b2e" />
    <path d="M2.2 7.8A14.7 14.7 0 0 0 14.6 29.7L21 18.5L9.4 18.3Z" fill="#279847" />
    <path d="M27.8 8.5A14.7 14.7 0 0 1 14.6 29.7L21.3 18.5L20 8.5Z" fill="#fcc41b" />
    <circle cx="15" cy="15" r="7.2" fill="#fff" />
    <circle cx="15" cy="15" r="5.8" fill="#2f77ea" />
  </S>
);
const TelegramLogo = () => (
  <S w={29} h={29}>
    <defs>
      <linearGradient id="tg" x1="0" y1="0" x2="0" y2="1">
        <stop offset="0" stopColor="#33a8e2" />
        <stop offset="1" stopColor="#1180bd" />
      </linearGradient>
    </defs>
    <circle cx="14.5" cy="14.5" r="14.3" fill="url(#tg)" />
    <path d="M5.5 14.8L21.5 8.6L18.8 22.6L13 18.2L17.5 12.2L11.4 16.6L12.4 21.5L10.2 17Z" fill="#fff" />
    <path d="M11.4 16.6L12.4 21.5L14.8 19.5Z" fill="#c5dbe8" />
  </S>
);
const NotepadLogo = () => (
  <S w={29} h={32}>
    <defs>
      <linearGradient id="npp" x1="0" y1="0" x2="0" y2="1">
        <stop offset="0" stopColor="#f7fbf0" />
        <stop offset=".5" stopColor="#b7e34b" />
        <stop offset="1" stopColor="#1b8c22" />
      </linearGradient>
    </defs>
    <path d="M.5 .5H19L24.5 6V31.5H.5Z" fill="#f4f4f4" stroke="#b5b5b5" />
    <rect x="2.5" y="9" width="20" height="21" fill="url(#npp)" />
    <path d="M3 4H18M3 6.5H22" stroke="#c9d7e2" />
    <path d="M2 1.5H18" stroke="#555" strokeDasharray="1 1" />
    <path d="M6.5 19V10H8.5V16M8.5 10.5Q10 9 10 12V19M11 14.5H15M13 12.5V17M15.5 14.5H19M17.2 12.5V17" fill="none" stroke="#222" strokeWidth="1.1" />
    <path d="M27 1.5L28.8 3L19.5 23L16.5 26L17 21.5Z" fill="#f2a922" stroke="#9b5f10" strokeWidth=".5" />
    <path d="M26 0L29 1.8L28 5L25 3Z" fill="#b9504a" />
  </S>
);

const Clock = () => (
  <div className="flex w-[60px] flex-col items-center leading-[18px]">
    <Fit w={27}>17:41</Fit>
    <Fit w={55}>22.06.2022</Fit>
  </div>
);

function TaskbarApps() {
  return (
    <>
      <div className="flex w-12 items-center justify-center"><WindowsLogo /></div>
      <div className="ml-[7px] flex w-[52px] items-center justify-center border-b-2 border-[#76b9ed] pt-0.5"><ExplorerLogo /></div>
      <div className="ml-[9px] flex w-[52px] items-center justify-center"><ChromeLogo /></div>
      <div className="ml-[9px] flex w-[52px] items-center justify-center"><TelegramLogo /></div>
      <div className="ml-[9px] flex w-[52px] items-center justify-center"><NotepadLogo /></div>
    </>
  );
}

function Tray() {
  return (
    <div className="ml-auto flex items-center">
      <S w={12} h={8}><path d="M1 7L6 1.5L11 7" fill="none" stroke="#fff" strokeWidth="1.4" /></S>
      <S w={16} h={14} className="ml-[10px]">
        <rect x="4.5" y="5.5" width="9.5" height="7" fill="#fff" stroke="#fff" />
        <path d="M7 3.5H14.5V5.5M15.5 7V11" stroke="#fff" fill="none" />
        <path d="M1.5 0V3M4.5 0V3M0 3.5H6V6L4 8H2L0 6ZM3 8V13H6" fill="none" stroke="#fff" />
      </S>
      <S w={17} h={14} className="ml-2">
        <path d="M4.5 2.5H15.5V10.5H5.5M8 13.5H13M10.5 10.5V13.5" fill="none" stroke="#fff" />
        <path d="M.5 1.5H5.5V5.5H.5ZM3 5.5V13.5" fill="none" stroke="#fff" />
      </S>
      <S w={17} h={14} className="ml-[7px]">
        <path d="M.5 4.5H3L6.5 1V13L3 9.5H.5Z" fill="none" stroke="#fff" />
        <path d="M8.5 4.5Q10 7 8.5 9.5M10.5 3Q13.3 7 10.5 11" fill="none" stroke="#fff" />
        <path d="M13 1.5Q17 7 13 12.5" fill="none" stroke="#777" />
      </S>
      <Fit w={23} className="ml-[10px]">РУС</Fit>
      <div className="ml-[9px]"><Clock /></div>
      <S w={17} h={17} className="ml-[15px]">
        <path d="M.5 1H15.5V13H10.5L8 15.5L5.5 13H.5Z" fill="none" stroke="#fff" strokeWidth="1.2" />
      </S>
      <div className="mr-1 ml-[19px] h-10 w-px bg-[#6a6a6a]" />
    </div>
  );
}

const sloganClass =
  "flex flex-col items-end font-['DejaVu_Serif',serif] text-transparent [-webkit-text-stroke-color:#e8850a] [-webkit-text-stroke-width:1px]";

export default function App() {
  return (
    <div className="relative flex h-[1080px] w-[3286px] items-start overflow-hidden bg-black font-['Open_Sans','Noto_Sans',sans-serif] text-xs text-white">
      {/* primary monitor */}
      <div className="flex h-[1080px] w-[1920px] flex-col justify-end">
        <div className={`mb-[14px] pr-[78px] text-[45px] leading-[58px] ${sloganClass}`}>
          <SloganLine w={773}>Time is our invisible and invincible</SloganLine>
          <SloganLine w={252}>archenemy.</SloganLine>
        </div>
        <div className="flex h-10 shrink-0 bg-[#0a0a0a]">
          <TaskbarApps />
          <Tray />
        </div>
      </div>

      {/* secondary monitor */}
      <div className="flex h-[768px] w-[1366px] flex-col justify-end">
        <div className={`-mb-px pr-[55px] text-[33px] leading-[41px] ${sloganClass}`}>
          <SloganLine w={550}>Time is our invisible and invincible</SloganLine>
          <SloganLine w={180}>archenemy.</SloganLine>
        </div>
        <div className="flex h-10 shrink-0 bg-[#0a0a0a]">
          <TaskbarApps />
          <div className="mr-[3px] ml-auto flex items-center"><Clock /></div>
        </div>
      </div>

      {desktopItems.map((item) => (
        <DesktopIcon key={`${item.x}-${item.y}`} item={item} />
      ))}
      <Explorer />
    </div>
  );
}
